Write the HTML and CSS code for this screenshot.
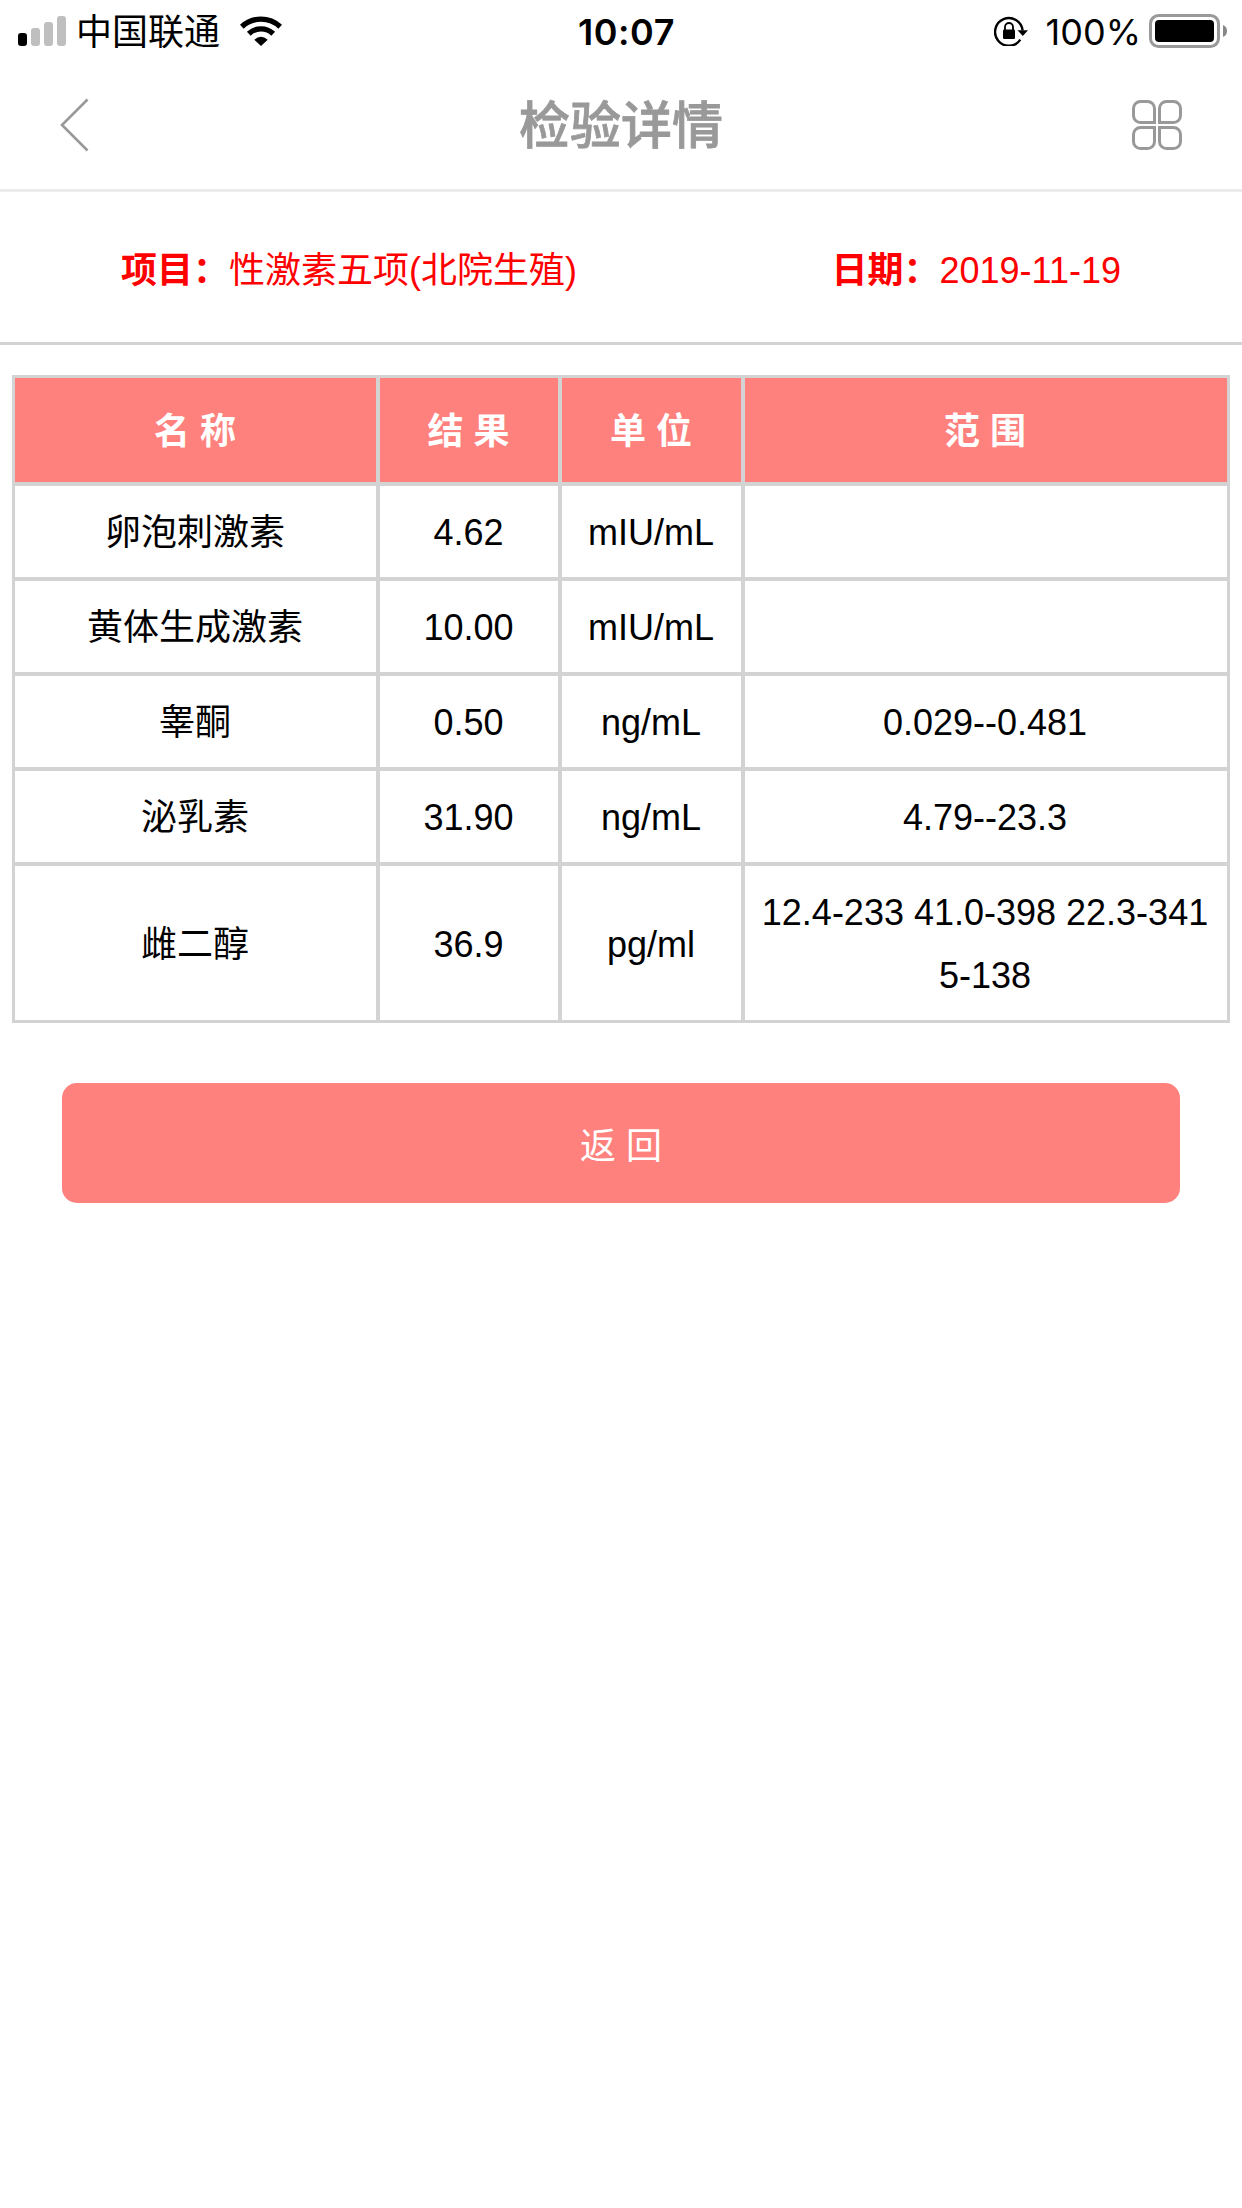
FILE: index.html
```html
<!DOCTYPE html>
<html lang="zh-CN">
  <head>
    <meta charset="UTF-8" />
    <meta name="viewport" content="width=device-width, initial-scale=1.0" />
    <title>检验详情</title>
    <link rel="stylesheet" href="styles.css" />
  </head>
  <body>
    <!-- 状态栏 -->
    <div class="status-bar">
      <div class="status-left">
        <svg class="signal" width="48" height="30" viewBox="0 0 48 30">
          <rect x="0" y="17" width="9" height="13" rx="3" fill="#000" />
          <rect x="13" y="12" width="9" height="18" rx="3" fill="#bfbfbf" />
          <rect x="26" y="6" width="9" height="24" rx="3" fill="#bfbfbf" />
          <rect x="39" y="0" width="9" height="30" rx="3" fill="#bfbfbf" />
        </svg>
        <span class="carrier">中国联通</span>
        <svg class="wifi" width="42" height="30" viewBox="0 0 42 30">
          <path d="M1.800 10.700A28 28 0 0 1 40.200 10.700" fill="none" stroke="#000" stroke-width="5.4" />
          <path d="M8.800 17.800A17.500 17.500 0 0 1 33.200 17.800" fill="none" stroke="#000" stroke-width="5.4" />
          <path d="M14.3 23.700Q21 18 27.7 23.700L21 30Z" />
        </svg>
      </div>
      <div class="time">10:07</div>
      <div class="status-right">
        <svg class="lock" width="34" height="30" viewBox="0 0 34 30">
          <path d="M26.3 23.7A13.8 13.8 0 1 1 28.6 14.5" fill="none" stroke="#000" stroke-width="2.4" />
          <path d="M23.5 14.3H34L28.8 20Z" />
          <rect x="9" y="13.500" width="12" height="9.500" rx="1.2" />
          <path d="M11 14V11a4 4 0 0 1 8 0V14" fill="none" stroke="#000" stroke-width="1.800" />
        </svg>
        <span class="percent">100%</span>
        <svg class="battery" width="78" height="34" viewBox="0 0 78 34">
          <rect x="1.500" y="1.500" width="68" height="31" rx="8" fill="none" stroke="#999" stroke-width="3" />
          <rect x="6" y="6" width="59" height="22" rx="4" />
          <path d="M74 11Q78 12.500 78 17T74 23Z" fill="#888" />
        </svg>
      </div>
    </div>

    <!-- 导航栏 -->
    <header class="nav">
      <svg width="50" height="54" viewBox="0 0 50 54">
        <path d="M27.500 1.500L2 27L27.500 52.500" fill="none" stroke="#999" stroke-width="2.6" />
      </svg>
      <h1>检验详情</h1>
      <svg width="50" height="50" viewBox="0 0 50 50" fill="none" stroke="#999" stroke-width="3">
        <path d="M22.500 22.500H8.500a7 7 0 0 1-7-7V8.500a7 7 0 0 1 7-7h7a7 7 0 0 1 7 7z" />
        <path d="M27.500 22.500H41.500a7 7 0 0 0 7-7V8.500a7 7 0 0 0-7-7h-7a7 7 0 0 0-7 7z" />
        <path d="M22.500 27.500H8.500a7 7 0 0 0-7 7V41.500a7 7 0 0 0 7 7h7a7 7 0 0 0 7-7z" />
        <path d="M27.500 27.500H41.500a7 7 0 0 1 7 7V41.500a7 7 0 0 1-7 7h-7a7 7 0 0 1-7-7z" />
      </svg>
    </header>

    <!-- 项目信息 -->
    <div class="info">
      <div><b>项目：</b>性激素五项(北院生殖)</div>
      <div><b>日期：</b>2019-11-19</div>
    </div>

    <!-- 检验结果 -->
    <table class="result">
      <colgroup>
        <col class="col-name" />
        <col class="col-value" />
        <col class="col-unit" />
        <col class="col-range" />
      </colgroup>
      <thead>
        <tr>
          <th>名 称</th>
          <th>结 果</th>
          <th>单 位</th>
          <th>范 围</th>
        </tr>
      </thead>
      <tbody>
        <tr>
          <td>卵泡刺激素</td>
          <td>4.62</td>
          <td>mIU/mL</td>
          <td></td>
        </tr>
        <tr>
          <td>黄体生成激素</td>
          <td>10.00</td>
          <td>mIU/mL</td>
          <td></td>
        </tr>
        <tr>
          <td>睾酮</td>
          <td>0.50</td>
          <td>ng/mL</td>
          <td>0.029--0.481</td>
        </tr>
        <tr>
          <td>泌乳素</td>
          <td>31.90</td>
          <td>ng/mL</td>
          <td>4.79--23.3</td>
        </tr>
        <tr>
          <td>雌二醇</td>
          <td>36.9</td>
          <td>pg/ml</td>
          <td>12.4-233 41.0-398 22.3-341 5-138</td>
        </tr>
      </tbody>
    </table>

    <button type="button" class="back-btn">返 回</button>
  </body>
</html>
```
FILE: styles.css
```css
* {
  box-sizing: border-box;
}

body {
  margin: 0;
  font-family: "Liberation Sans", "Noto Sans CJK SC", sans-serif;
  font-size: 36px;
  color: #000;
  background-color: #fff;
}

/* 状态栏 */
.status-bar {
  display: grid;
  grid-template-columns: 1fr auto 1fr;
  align-items: center;
  height: 60px;
  padding: 0 15px 0 18px;
  font-family: Inter, "Noto Sans CJK SC", sans-serif;
}

.status-left,
.status-right {
  display: flex;
  align-items: center;
}

.status-right {
  justify-content: flex-end;
}

.carrier {
  margin: 0 20px 0 10px;
  padding-top: 2px;
  line-height: 60px;
}

.time {
  padding: 2px 0 0 8px;
  font-weight: 600;
  line-height: 60px;
  letter-spacing: 0.6px;
}

.percent {
  margin: 0 8px 0 18px;
  padding-top: 2px;
  line-height: 60px;
}

/* 导航栏 */
.nav {
  display: flex;
  justify-content: space-between;
  align-items: center;
  height: 132px;
  padding: 0 60px;
  border-bottom: 3px solid #ebebeb;
}

.nav h1 {
  margin: 0;
  padding-top: 5px;
  font-size: 51px;
  font-weight: 500;
  line-height: 72px;
  color: #999;
  -webkit-text-stroke: 0.8px #999;
}

/* 项目信息 */
.info {
  display: flex;
  justify-content: space-between;
  height: 153px;
  padding: 0 121px;
  line-height: 158px;
  color: #f00;
  border-bottom: 3px solid #d3d3d3;
}

/* 结果表格 */
.result {
  width: 1218px;
  margin: 30px auto 60px;
  table-layout: fixed;
  border-spacing: 0;
  border-top: 3px solid #d3d3d3;
  border-left: 3px solid #d3d3d3;
  text-align: center;
}

.col-name {
  width: 365px;
}

.col-value {
  width: 182px;
}

.col-unit {
  width: 183px;
}

.result th,
.result td {
  padding: 15px 11px 13px 10px;
  line-height: 63px;
  border-right: 4px solid #d3d3d3;
  border-bottom: 4px solid #d3d3d3;
}

.result th {
  height: 108px;
  color: #fff;
  background-color: #ff817e;
}

.result th:last-child,
.result td:last-child {
  padding-right: 12px;
  border-right-width: 3px;
}

.result tr:last-child td {
  border-bottom-width: 3px;
}

.back-btn {
  display: block;
  width: 1118px;
  height: 120px;
  margin: 0 auto;
  padding: 0;
  font-family: inherit;
  font-size: 36px;
  color: #fff;
  background-color: #ff817e;
  border: none;
  border-radius: 15px;
}
```
